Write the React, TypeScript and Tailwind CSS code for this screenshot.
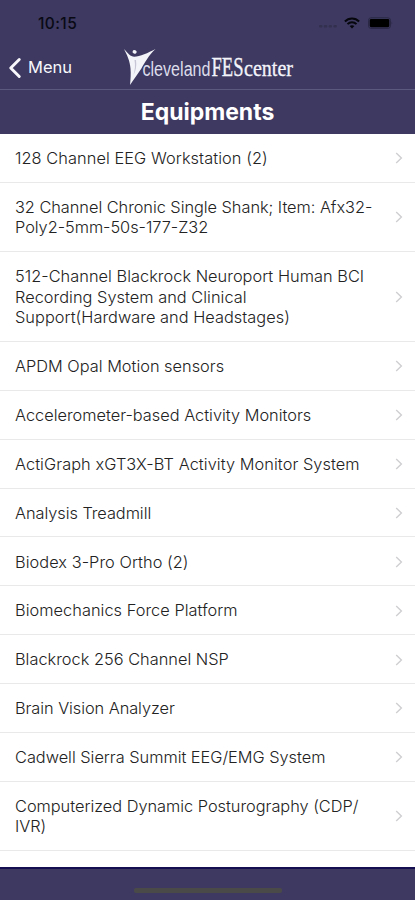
import { ChevronLeft } from 'lucide-react';

type Equipment = {
    id: number;
    lines: string[];
    tracking?: string;
};

const equipments: Equipment[] = [
    { id: 1, lines: ['128 Channel EEG Workstation (2)'], tracking: 'tracking-[0.07px]' },
    { id: 2, lines: ['32 Channel Chronic Single Shank; Item: Afx32-', 'Poly2-5mm-50s-177-Z32'], tracking: 'tracking-[-0.04px]' },
    { id: 3, lines: ['512-Channel Blackrock Neuroport Human BCI', 'Recording System and Clinical', 'Support(Hardware and Headstages)'], tracking: 'tracking-[0.03px]' },
    { id: 4, lines: ['APDM Opal Motion sensors'] },
    { id: 5, lines: ['Accelerometer-based Activity Monitors'] },
    { id: 6, lines: ['ActiGraph xGT3X-BT Activity Monitor System'], tracking: 'tracking-[0.06px]' },
    { id: 7, lines: ['Analysis Treadmill'], tracking: 'tracking-[-0.05px]' },
    { id: 8, lines: ['Biodex 3-Pro Ortho (2)'], tracking: 'tracking-[0.05px]' },
    { id: 9, lines: ['Biomechanics Force Platform'], tracking: 'tracking-[0.04px]' },
    { id: 10, lines: ['Blackrock 256 Channel NSP'], tracking: 'tracking-[0.01px]' },
    { id: 11, lines: ['Brain Vision Analyzer'], tracking: 'tracking-[-0.06px]' },
    { id: 12, lines: ['Cadwell Sierra Summit EEG/EMG System'], tracking: 'tracking-[-0.02px]' },
    { id: 13, lines: ['Computerized Dynamic Posturography (CDP/', 'IVR)'], tracking: 'tracking-[-0.02px]' },
];

const StatusBar = () => (
    <div className="flex h-[46px] items-center justify-between pl-[38px] pr-[22px]">
        <span className="mt-px text-[15.5px] font-medium leading-none tracking-[0.4px] text-[#090914]">10:15</span>
        <div className="flex items-center">
            {/* No cellular signal */}
            <svg className="mr-[7px] mt-[7px] h-[3px] w-[18px]" viewBox="0 0 18 3" fill="#33304f">
                <rect x="0" width="3.4" height="2.5" rx="1" />
                <rect x="4.8" width="3.4" height="2.5" rx="1" />
                <rect x="9.6" width="3.4" height="2.5" rx="1" />
                <rect x="14.4" width="3.4" height="2.5" rx="1" />
            </svg>
            <svg className="mr-2 h-3 w-4" viewBox="0 0 16 12" fill="none" stroke="#06060d" strokeWidth="2">
                <path d="M0.9 4.5C4.8 .4 11.2 .4 15.1 4.5" />
                <path d="M3.5 7.1C6 4.6 10 4.6 12.5 7.1" />
                <path d="M5.6 9.1C7 7.8 9 7.8 10.4 9.1L8 11.6Z" fill="#06060d" stroke="none" />
            </svg>
            <svg className="h-3 w-[25px]" viewBox="0 0 25 12">
                <rect x="0.5" y="0.8" width="22" height="10.6" rx="2.6" fill="none" stroke="#2a2845" />
                <rect x="1.7" y="2" width="19.6" height="8.2" rx="1.4" fill="#000" />
                <path d="M23.6 4.2q1.3 1.8 0 3.6z" fill="#2a2845" />
            </svg>
        </div>
    </div>
);

const Logo = () => (
    <svg className="absolute left-[122px] top-0 h-[43px] w-[174px]" viewBox="0 0 174 43" fill="#f3f3fa">
        <path d="M2 3C6 7.5 8.5 10.5 12.2 10.8C18 10.5 26 7 33.5 3C27 9 22.5 17 19.4 22.5C15.5 28 11.5 34 8 39C8.6 33 9 28 8.5 22.5C8 15 5 9 2 3Z" />
        <path d="M12.5 14C13.5 19 13 24 11.5 29C13.8 25 14.8 20 14 14Z" fill="#c6c6d6" />
        <ellipse cx="12.6" cy="5.9" rx="2.1" ry="1.8" transform="rotate(25 12.6 5.9)" />
        <text x="20.5" y="30" textLength="68" lengthAdjust="spacingAndGlyphs" fontFamily="Liberation Sans" fontSize="20" fill="#dcdcea">cleveland</text>
        <text x="89.5" y="30" textLength="32" lengthAdjust="spacingAndGlyphs" fontFamily="Liberation Serif" fontSize="27.5" stroke="#f3f3fa" strokeWidth="0.35">FES</text>
        <text x="122" y="30" textLength="49" lengthAdjust="spacingAndGlyphs" fontFamily="Liberation Serif" fontSize="22.5" stroke="#f3f3fa" strokeWidth="0.3">center</text>
    </svg>
);

const NavBar = () => (
    <div className="relative flex h-11 items-center border-b border-[#5b597e] text-[#f7f7fc]">
        <button className="flex items-center">
            <ChevronLeft className="-ml-0.5 h-[34px] w-[34px]" strokeWidth={2.1} />
            <span className="-ml-1 text-[16.5px] leading-none">Menu</span>
        </button>
        <Logo />
    </div>
);

const EquipmentRow = ({ item }: { item: Equipment }) => (
    <li className="flex items-center border-b border-[#e9e9e9] pb-[13.4px] pl-[15px] pr-3 pt-[14.1px]">
        <div className={`flex-1 whitespace-nowrap text-[16.35px] font-[350] leading-[20.4px] text-[#222] ${item.tracking ?? ''}`}>
            {item.lines.map((line) => (
                <div key={line}>{line}</div>
            ))}
        </div>
        <svg className="h-3 w-2" viewBox="0 0 8 12" fill="none" stroke="#cfcfd2" strokeWidth="1.4">
            <path d="M1.2 1L6.4 6L1.2 11" />
        </svg>
    </li>
);

export default function App() {
    return (
        <div className="flex h-[900px] w-[415px] flex-col overflow-hidden bg-[#3d3960] font-['Inter',sans-serif]">
            <StatusBar />
            <NavBar />
            <h1 className="flex h-11 shrink-0 items-center justify-center pt-px text-[23px] font-bold text-white">Equipments</h1>

            <ul className="h-[733px] shrink-0 overflow-hidden bg-white">
                {equipments.map((item) => (
                    <EquipmentRow key={item.id} item={item} />
                ))}
            </ul>

            {/* Home indicator */}
            <div className="flex flex-1 justify-center border-t-2 border-[#150f51] pt-[19px]">
                <div className="h-[5px] w-[148px] rounded-xs bg-[#4a4b49]" />
            </div>
        </div>
    );
}
